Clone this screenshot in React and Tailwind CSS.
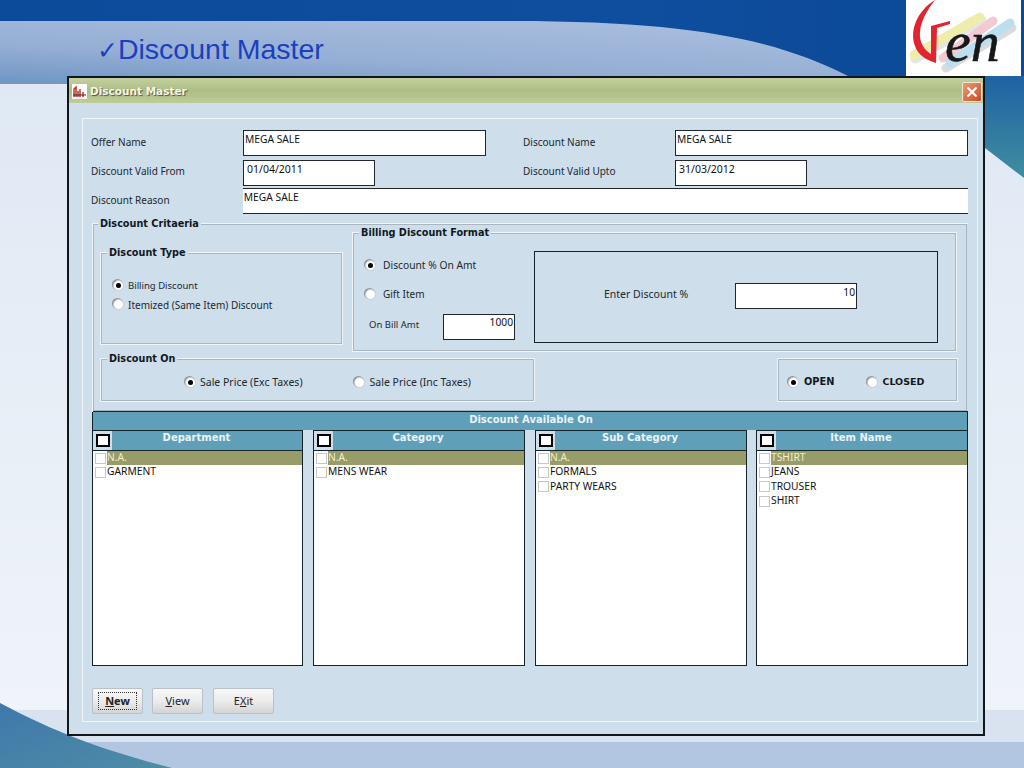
const uiFont = { fontFamily: '"Noto Sans", sans-serif' };
const boldFont = { fontFamily: '"DejaVu Sans", sans-serif' };

// slide artwork behind the window
const SlideBackground = () => (
  <svg className="absolute inset-0 w-full h-full" viewBox="0 0 1024 768" preserveAspectRatio="none">
    <defs>
      <linearGradient id="page" x1="0" y1="0" x2="0" y2="1">
        <stop offset="0" stopColor="#dde7f3" />
        <stop offset="1" stopColor="#f1f5fa" />
      </linearGradient>
      <linearGradient id="band" x1="0" y1="0" x2="1" y2="0">
        <stop offset="0" stopColor="#0c4a9a" />
        <stop offset="0.6" stopColor="#0f4d9f" />
        <stop offset="1" stopColor="#0b4a94" />
      </linearGradient>
      <linearGradient id="swoosh" x1="0" y1="1" x2="0.6" y2="0">
        <stop offset="0" stopColor="#6f95c4" />
        <stop offset="0.45" stopColor="#95aed4" />
        <stop offset="1" stopColor="#a6bcdd" />
      </linearGradient>
      <linearGradient id="side" x1="0" y1="0" x2="0" y2="1">
        <stop offset="0" stopColor="#1f62a3" />
        <stop offset="1" stopColor="#3f8e9f" />
      </linearGradient>
      <linearGradient id="wave" x1="0" y1="0" x2="1" y2="1">
        <stop offset="0" stopColor="#3f78ab" />
        <stop offset="1" stopColor="#4f8ca6" />
      </linearGradient>
    </defs>
    <rect width="1024" height="768" fill="url(#page)" />
    <rect y="710" width="1024" height="58" fill="#d9e3f0" />
    <rect y="742" width="1024" height="26" fill="#b2c6e1" />
    <path d="M0 0H1024V76H0Z" fill="url(#band)" />
    <path d="M985 76H1024V178L985 148Z" fill="url(#side)" />
    <path d="M0 21H512C700 21 780 42 848 76H67V84H0Z" fill="url(#swoosh)" />
    <path d="M0 703C60 735 110 752 172 768H0Z" fill="url(#wave)" />
  </svg>
);

const GenLogo = () => (
  <div className="absolute top-0 left-[906px] w-[115px] h-[76px] bg-white">
    <svg viewBox="0 0 115 76" className="w-full h-full">
      <g strokeLinecap="round" strokeWidth="9">
        <path d="M9 59L76 20" stroke="#c9ccd0" opacity="0.5" />
        <path d="M40 68L106 28" stroke="#9fa8b4" opacity="0.4" />
        <path d="M8 55L74 17" stroke="#eeeeaa" />
        <path d="M37 58L87 21" stroke="#f3c9d2" />
        <path d="M44 63L104 23" stroke="#bcdff0" />
      </g>
      <path d="M29 0C12 10 3 30 9 46C12 55 20 60 30 63L31 28L44 24V21L25 26V54C18 50 13 42 14 32C15 20 22 9 29 0Z" fill="#e1242f" />
      <text x="39" y="61" fontSize="58" fontStyle="italic" fill="#16181a" stroke="#16181a" strokeWidth="0.6" style={{ fontFamily: '"Liberation Serif", serif' }}>en</text>
    </svg>
  </div>
);

const Field = ({ value, className = "", pad = "pl-px pt-px", align = "", size = "text-[10.25px]" }) => (
  <div className={`h-[26px] bg-white border border-[#20262b] leading-[14px] text-[#111] ${size} ${pad} ${align} ${className}`}>
    {value}
  </div>
);

const Label = ({ children, className = "", size = "text-[10px]" }) => (
  <span className={`leading-[14px] text-[#20282e] ${size} ${className}`}>{children}</span>
);

const Radio = ({ checked }) => (
  <span className="flex items-center justify-center w-[11px] h-[11px] shrink-0 rounded-full bg-white border border-[#c2ccd4] shadow-[-1px_-1px_0_#8f979e]">
    {checked && <span className="w-[5px] h-[5px] rounded-full bg-black" />}
  </span>
);

const GroupBox = ({ title, className = "", legendAt = "left-[6px]", children }) => (
  <div className={`relative border border-[#f0f5f9] outline outline-1 -outline-offset-2 outline-[#a9b5bf] ${className}`}>
    {title && (
      <span className={`absolute -top-[7px] px-[2px] bg-[#cfdeeb] text-[9.7px] leading-[14px] font-bold text-[#10181f] ${legendAt}`} style={boldFont}>
        {title}
      </span>
    )}
    {children}
  </div>
);

const ListPanel = ({ title, items, className = "w-[212px]" }) => (
  <div className={`flex flex-col h-[236px] bg-white border border-[#15232b] ${className}`}>
    <div className="flex items-start h-[20px] bg-[#5f9fb8] border-b border-[#15232b] shrink-0">
      <span className="flex items-center justify-center w-[19px] h-[19px] bg-[#cfdeeb]">
        <span className="w-[14px] h-[13px] bg-white border-2 border-black" />
      </span>
      <span className="flex-1 text-center text-[10px] leading-[14px] pr-[21px] font-bold text-[#eaf3f7]" style={boldFont}>
        {title}
      </span>
    </div>
    {items.map((item, i) => (
      <div key={item} className={`flex items-start h-[14.3px] ${i === 0 ? "bg-[#979c68] text-[#f3eecb]" : "text-[#111]"}`}>
        <span className="flex items-center justify-center w-[14px] h-full bg-white shrink-0">
          <span className="w-[11px] h-[11px] bg-white border border-[#c8c8c2]" />
        </span>
        <span className="text-[10.25px] leading-[13px]">{item}</span>
      </div>
    ))}
  </div>
);

const WinButton = ({ className = "", children }) => (
  <div className={`flex items-center justify-center h-[26px] rounded-[2px] border border-[#b9c0c6] bg-gradient-to-b from-[#f8f8f8] via-[#ececec] to-[#d4d4d4] text-[11px] text-[#222] ${className}`}>
    {children}
  </div>
);

export default function App() {
  return (
    <div className="relative w-[1024px] h-[768px] overflow-hidden" style={uiFont}>
      <SlideBackground />
      <GenLogo />

      <div className="relative h-[76px] pl-[97px] pt-[32px]">
        <h1 className="text-[28.5px] leading-[34px] text-[#1b3fc0]" style={{ fontFamily: '"Liberation Sans", sans-serif' }}>
          <span style={boldFont} className="text-[25px] font-bold">✓</span>Discount Master
        </h1>
      </div>

      {/* Window */}
      <div className="relative w-[918px] h-[660px] ml-[67px] bg-[#cfdeeb] border-2 border-[#10161a]">
        <div className="flex items-center h-[25px] pl-[3px] pr-px pt-[2px] bg-gradient-to-b from-[#c4d09f] via-[#adbd85] to-[#bfcc98]">
          <svg width="15" height="15" viewBox="0 0 15 15">
            <rect width="15" height="15" fill="#fff" />
            <path d="M2 13V5L4 3V13M6 13V7M8 13V5M11 13V8" stroke="#c3352a" strokeWidth="1.5" fill="none" />
            <path d="M1 11H14" stroke="#333" />
          </svg>
          <span className="ml-[3px] text-[10.5px] font-bold text-[#f4f5e6] [text-shadow:1px_1px_1px_#4c5340]" style={boldFont}>
            Discount Master
          </span>
          <span className="ml-auto flex items-center justify-center w-[20px] h-[20px] rounded-[2px] bg-gradient-to-br from-[#e89a70] to-[#cc4a28] border border-[#f0e6d8]">
            <svg width="12" height="12" viewBox="0 0 12 12">
              <path d="M1.5 1.5L10.5 10.5M10.5 1.5L1.5 10.5" stroke="#fff" strokeWidth="2.2" />
            </svg>
          </span>
        </div>

        {/* Form */}
        <div className="mt-[15px] ml-[13px] w-[896px] h-[604px] border border-[#eef3f7] pl-[9px] pr-[9px] pt-[11px]">
          <div className="flex items-start h-[30px] -ml-px">
            <Label className="w-[152px] pt-[5px]">Offer Name</Label>
            <Field value="MEGA SALE" className="w-[243px]" />
            <Label className="ml-[37px] w-[152px] pt-[5px]">Discount Name</Label>
            <Field value="MEGA SALE" className="w-[293px]" />
          </div>
          <div className="flex items-start h-[28px] -ml-px">
            <Label className="w-[152px] pt-[4px]">Discount Valid From</Label>
            <Field value="01/04/2011" className="w-[132px]" pad="pl-[3px] pt-px" size="text-[10.5px]" />
            <Label className="ml-[148px] w-[152px] pt-[4px]">Discount Valid Upto</Label>
            <Field value="31/03/2012" className="w-[132px]" pad="pl-[3px] pt-px" size="text-[10.5px]" />
          </div>
          <div className="flex items-start h-[35px] -ml-px">
            <Label className="w-[152px] pt-[5px]">Discount Reason</Label>
            <Field value="MEGA SALE" className="w-[726px] border-x-0" />
          </div>

          <GroupBox title="Discount Critaeria" legendAt="left-[5px]" className="w-[876px] h-[189px] pl-[7px] pr-[10px] border-r-0 border-b-0 outline-0">
            <div className="flex items-start">
              <GroupBox title="Discount Type" className="mt-[28px] w-[243px] h-[93px] pt-[23px] pl-[12px]">
                <div className="flex items-center gap-[4px] h-[19px]">
                  <Radio checked />
                  <Label size="text-[9.5px]">Billing Discount</Label>
                </div>
                <div className="flex items-center gap-[4px] h-[19px]">
                  <Radio />
                  <Label>Itemized (Same Item) Discount</Label>
                </div>
              </GroupBox>
              <GroupBox title="Billing Discount Format" className="flex ml-[9px] mt-[8px] w-[605px] h-[120px]">
                <div className="w-[181px] pl-[12px] pt-[24px]">
                  <div className="flex items-center gap-[7px] h-[16px]">
                    <Radio checked />
                    <Label size="text-[10.25px]">Discount % On Amt</Label>
                  </div>
                  <div className="flex items-center gap-[7px] h-[16px] mt-[13px]">
                    <Radio />
                    <Label>Gift Item</Label>
                  </div>
                  <div className="flex items-start mt-[12px]">
                    <Label className="ml-[4px] w-[74px] pt-[4px]" size="text-[9.5px]">On Bill Amt</Label>
                    <Field value="1000" className="w-[72px]" pad="pr-px" align="text-right" />
                  </div>
                </div>
                <div className="flex items-start mt-[18px] w-[404px] h-[92px] pt-[31px] border border-[#15232b]">
                  <Label className="ml-[69px] w-[131px] pt-[4px]" size="text-[10.5px]">Enter Discount %</Label>
                  <Field value="10" className="w-[122px]" pad="pr-px pt-px" align="text-right" />
                </div>
              </GroupBox>
            </div>
            <div className="flex justify-between mt-[6px]">
              <GroupBox title="Discount On" className="flex items-center w-[435px] h-[44px] pl-[84px] pt-[4px]">
                <Radio checked />
                <Label className="ml-[4px]" size="text-[10.5px]">Sale Price (Exc Taxes)</Label>
                <span className="ml-[51px]"><Radio /></span>
                <Label className="ml-[5px]" size="text-[10.5px]">Sale Price (Inc Taxes)</Label>
              </GroupBox>
              <GroupBox className="flex items-center w-[181px] h-[44px] pl-[10px] pt-[4px]">
                <Radio checked />
                <span className="ml-[5px] text-[9.8px] font-bold text-[#10181f]" style={boldFont}>OPEN</span>
                <span className="ml-[33px]"><Radio /></span>
                <span className="ml-[4px] text-[9.5px] font-bold text-[#10181f]" style={boldFont}>CLOSED</span>
              </GroupBox>
            </div>
          </GroupBox>

          {/* Discount Available On */}
          <div className="w-[876px] bg-[#5f9fb8] border-t border-[#15232b] -mt-[1px]">
            <div className="h-[18px] text-center text-[10px] leading-[14px] pt-[1px] pl-[2px] font-bold text-[#eaf3f7] border-x border-[#15232b]" style={boldFont}>
              Discount Available On
            </div>
            <div className="flex bg-[#cfdeeb]">
              <ListPanel title="Department" items={["N.A.", "GARMENT"]} className="w-[211px]" />
              <ListPanel title="Category" items={["N.A.", "MENS WEAR"]} className="w-[212px] ml-[10px]" />
              <ListPanel title="Sub Category" items={["N.A.", "FORMALS", "PARTY WEARS"]} className="w-[212px] ml-[10px]" />
              <ListPanel title="Item Name" items={["TSHIRT", "JEANS", "TROUSER", "SHIRT"]} className="w-[212px] ml-[9px]" />
            </div>
          </div>

          <div className="flex mt-[22px]">
            <WinButton className="w-[51px]">
              <span className="flex items-center justify-center w-[39px] h-[18px] border border-dotted border-[#333] font-bold">
                <u>N</u>ew
              </span>
            </WinButton>
            <WinButton className="w-[51px] ml-[9px]"><u>V</u>iew</WinButton>
            <WinButton className="w-[61px] ml-[10px]">E<u>X</u>it</WinButton>
          </div>
        </div>
      </div>
    </div>
  );
}
